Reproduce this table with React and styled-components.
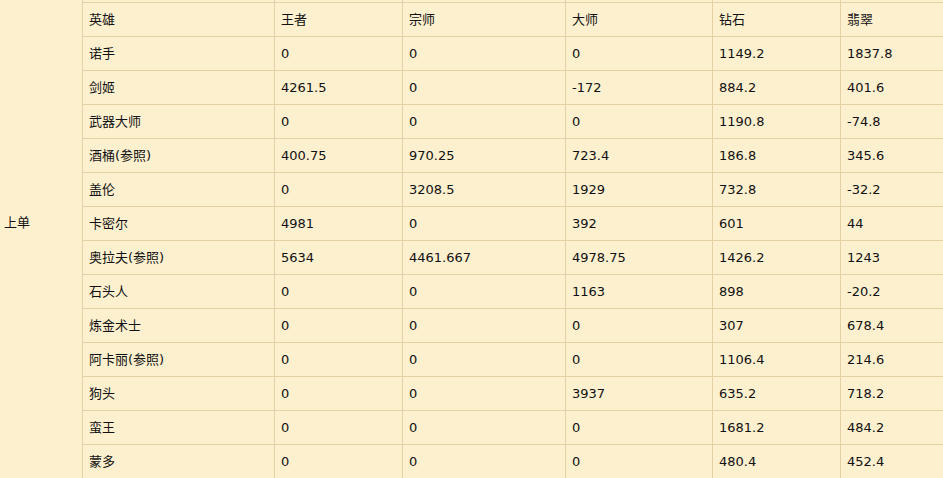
import React from 'react';
import styled, { createGlobalStyle } from 'styled-components';

const GlobalStyle = createGlobalStyle`
  html, body {
    margin: 0;
    padding: 0;
    background: #fdf0cf;
    overflow: hidden;
  }
  body {
    font-family: "DejaVu Sans", "Noto Sans CJK SC", sans-serif;
    color: #111;
  }
`;

const line = '#e3d0a4';

const Table = styled.div`
  display: grid;
  grid-template-columns: 83px 192px 128px 163px 147px 128px 140px;
  grid-template-rows: 3px repeat(14, 34px);
  width: 981px;
  background: #fdf0cf;
`;

const RoleCell = styled.div`
  grid-column: 1;
  grid-row: 1 / span 15;
  box-sizing: border-box;
  border-right: 1px solid ${line};
  padding: 215px 0 0 4px;
  font-size: 13px;
  line-height: 16px;
`;

const Cell = styled.div`
  box-sizing: border-box;
  border-right: ${(p) => (p.$last ? 'none' : `1px solid ${line}`)};
  border-bottom: 1px solid ${line};
  padding: 0 6px;
  display: flex;
  align-items: center;
  font-size: 13px;
  line-height: 16px;
  white-space: nowrap;
`;

const header = ['英雄', '王者', '宗师', '大师', '钻石', '翡翠'];

const rows = [
  ['诺手', '0', '0', '0', '1149.2', '1837.8'],
  ['剑姬', '4261.5', '0', '-172', '884.2', '401.6'],
  ['武器大师', '0', '0', '0', '1190.8', '-74.8'],
  ['酒桶(参照)', '400.75', '970.25', '723.4', '186.8', '345.6'],
  ['盖伦', '0', '3208.5', '1929', '732.8', '-32.2'],
  ['卡密尔', '4981', '0', '392', '601', '44'],
  ['奥拉夫(参照)', '5634', '4461.667', '4978.75', '1426.2', '1243'],
  ['石头人', '0', '0', '1163', '898', '-20.2'],
  ['炼金术士', '0', '0', '0', '307', '678.4'],
  ['阿卡丽(参照)', '0', '0', '0', '1106.4', '214.6'],
  ['狗头', '0', '0', '3937', '635.2', '718.2'],
  ['蛮王', '0', '0', '0', '1681.2', '484.2'],
  ['蒙多', '0', '0', '0', '480.4', '452.4'],
];

const renderRow = (cells, key) =>
  cells.map((text, i) => (
    <Cell key={`${key}-${i}`} $last={i === cells.length - 1}>
      {text}
    </Cell>
  ));

const App = () => (
  <>
    <GlobalStyle />
    <Table>
      <RoleCell>上单</RoleCell>
      {/* bottom edge of the row above, cut off at the top */}
      {renderRow(['', '', '', '', '', ''], 'top')}
      {renderRow(header, 'head')}
      {rows.map((r, idx) => renderRow(r, `r${idx}`))}
    </Table>
  </>
);

export default App;
